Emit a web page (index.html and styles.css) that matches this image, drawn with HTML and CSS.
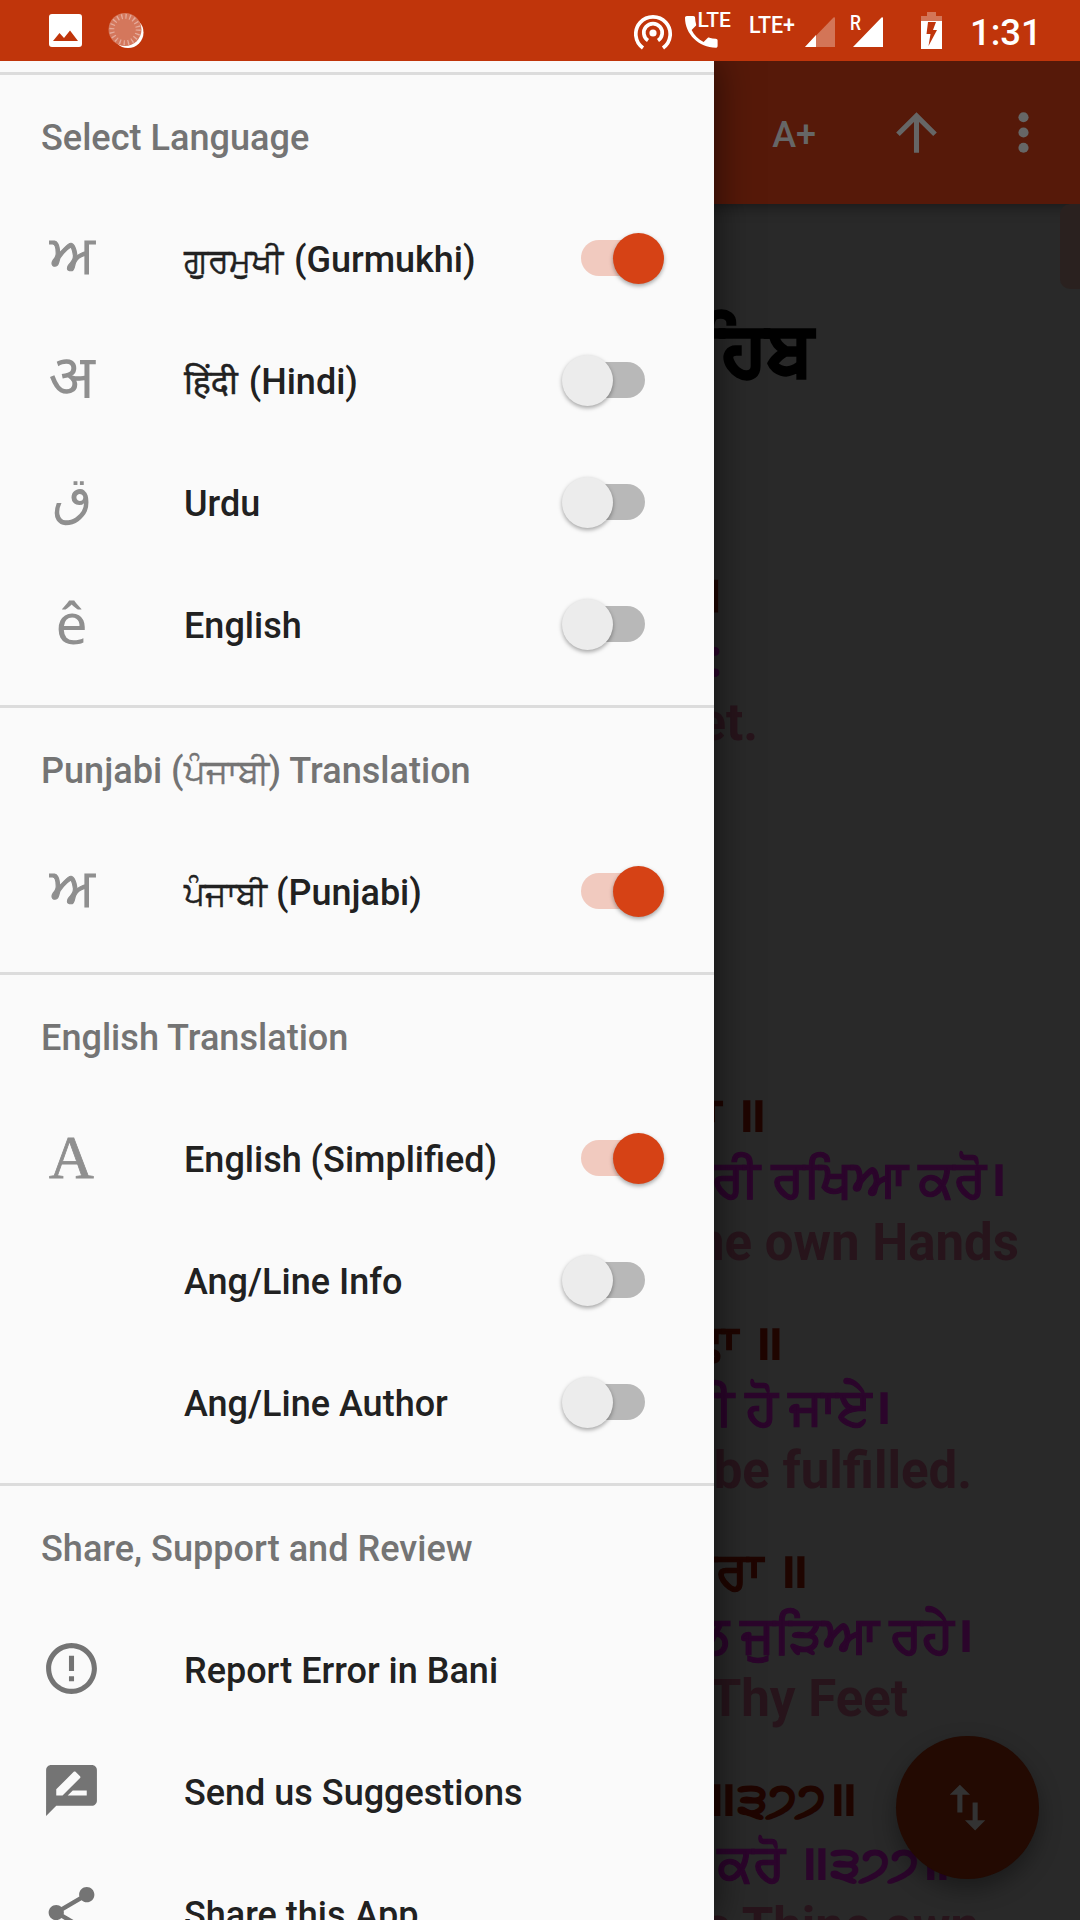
FILE: index.html
```html
<!DOCTYPE html>
<html lang="pa">
<head>
<meta charset="utf-8">
<title>Bani</title>
<link rel="stylesheet" href="styles.css">
</head>
<body>
<div class="screen">
  <header class="status">
    <svg class="status-left" width="100" height="61" viewBox="46 0 100 61">
      <path fill="#fff" fill-rule="evenodd" d="M52 14h27q3 0 3 3v27q0 3-3 3H52q-3 0-3-3V17q0-3 3-3zM53 41h25l-8-10.500-6 7.500-4.500-5z"/>
      <circle cx="128" cy="32.500" r="15.500" fill="#fff"/>
      <circle cx="125" cy="29.500" r="16.500" fill="#d4775c"/>
      <circle cx="125" cy="29.500" r="13.200" fill="none" stroke="#e5ab9b" stroke-width="5" stroke-dasharray="1.300 2.847"/>
    </svg>
    <svg class="status-right" width="312" height="61" viewBox="634 0 312 61">
      <g fill="none" stroke="#fff" stroke-width="3.700">
        <path d="M643 48a17.200 17.200 0 1 1 20 0"/>
        <path d="M648 40.500a9.200 9.200 0 1 1 10 0"/>
      </g>
      <circle cx="653" cy="33" r="3.600" fill="#fff"/>
      <path fill="#fff" d="M686.800 16h6.500c1 0 1.800.8 1.800 1.800 0 2.300.4 4.400 1 6.500.2.600.1 1.300-.5 1.800l-4 4c2.600 5.200 6.800 9.400 12 12l4-4c.5-.5 1.200-.6 1.800-.4 2 .7 4.200 1 6.400 1 1 0 1.800.8 1.800 1.800V46c0 1-.8 1.800-1.800 1.800-17 0-30.800-13.800-30.800-30 0-1 .8-1.800 1.800-1.800z"/>
      <text class="tag" x="697.500" y="27" font-size="19.500" textLength="33.500" lengthAdjust="spacingAndGlyphs">LTE</text>
      <text class="tag" x="749" y="32.500" font-size="24.500" textLength="46" lengthAdjust="spacingAndGlyphs">LTE+</text>
      <path fill="#d37557" d="M805 47 833.500 17.500q1.500-1 1.500 1V47z"/>
      <path fill="#fff" d="M805 47l11-12v12zM853 47 881.500 17.500q1.500-1 1.500 1V47z"/>
      <text class="tag" x="850" y="30" font-size="19.500" textLength="11" lengthAdjust="spacingAndGlyphs">R</text>
      <path fill="#d37557" d="M927 12h9v4h6v5h-21v-5h6z"/>
      <path fill="#fff" fill-rule="evenodd" d="M921 21h21v28h-21zM928 22l-1.500 12h4l-2 12 8.500-16h-4l3-8z"/>
    </svg>
    <span class="clock">1:31</span>
  </header>

  <nav class="toolbar">
    <span class="zoom">A+</span>
    <svg class="icon" viewBox="0 0 24 24"><path d="M4 12l1.410 1.410L11 7.830V20h2V7.830l5.580 5.590L20 12l-8-8-8 8z"/></svg>
    <svg class="icon" viewBox="0 0 24 24"><circle cx="12" cy="6" r="2"/><circle cx="12" cy="12" r="2"/><circle cx="12" cy="18" r="2"/></svg>
  </nav>

  <main class="reader">
    <h1 class="title">ਸਾਹਿਬ</h1>
    <section class="stanza opening">
      <p class="verse e1">ਚੌਪਈ ।</p>
      <p class="meaning e2">ਚੌਪਈ :</p>
      <p class="english e3">feet.</p>
    </section>
    <section class="stanza">
      <p class="verse e4">ਰਛਾ <span class="danda">॥</span></p>
      <p class="meaning e5">ਮੇਰੀ ਰਖਿਆ ਕਰੋ<span class="danda">।</span></p>
      <p class="english e6">Thine own Hands</p>
    </section>
    <section class="stanza">
      <p class="verse e7">ਇਛਾ <span class="danda">॥</span></p>
      <p class="meaning e8">ਪੂਰੀ ਹੋ ਜਾਏ<span class="danda">।</span></p>
      <p class="english e9">be fulfilled.</p>
    </section>
    <section class="stanza">
      <p class="verse e10">ਹਮਾਰਾ <span class="danda">॥</span></p>
      <p class="meaning e11">ਨਾਲ ਜੁੜਿਆ ਰਹੇ<span class="danda">।</span></p>
      <p class="english e12">Thy Feet</p>
    </section>
    <section class="stanza">
      <p class="verse e13"><span class="danda">॥</span><span class="num">੩੭੭</span><span class="danda">॥</span></p>
      <p class="meaning e14">ਕਰੋ <span class="danda">॥</span><span class="num">੩੭੭</span><span class="danda">॥</span></p>
      <p class="english e15">as Thine own</p>
    </section>
  </main>
  <div class="scroll-thumb"></div>
  <div class="fab"><svg class="icon" viewBox="0 0 24 24"><path d="M9 3L5 6.990h3V14h2V6.990h3L9 3zm7 14.010V10h-2v7.010h-3L15 21l4-3.990h-3z"/></svg></div>

  <aside class="drawer">
    <section class="group">
      <h2>Select Language</h2>
      <div class="row"><span class="glyph gur">ਅ</span><span class="label"><span class="indic spaced">ਗੁਰਮੁਖੀ</span> (Gurmukhi)</span><i class="switch on"></i></div>
      <div class="row"><span class="glyph dev">अ</span><span class="label"><span class="indic spaced">हिंदी</span> (Hindi)</span><i class="switch"></i></div>
      <div class="row"><span class="glyph ara">ق</span><span class="label">Urdu</span><i class="switch"></i></div>
      <div class="row"><span class="glyph lat">ê</span><span class="label">English</span><i class="switch"></i></div>
    </section>
    <section class="group">
      <h2>Punjabi (<span class="indic">ਪੰਜਾਬੀ</span>) Translation</h2>
      <div class="row"><span class="glyph gur">ਅ</span><span class="label"><span class="indic punjabi">ਪੰਜਾਬੀ</span> (Punjabi)</span><i class="switch on"></i></div>
    </section>
    <section class="group">
      <h2>English Translation</h2>
      <div class="row"><span class="glyph ser">A</span><span class="label">English (Simplified)</span><i class="switch on"></i></div>
      <div class="row"><span class="glyph"></span><span class="label">Ang/Line Info</span><i class="switch"></i></div>
      <div class="row"><span class="glyph"></span><span class="label">Ang/Line Author</span><i class="switch"></i></div>
    </section>
    <section class="group">
      <h2>Share, Support and Review</h2>
      <div class="row"><svg class="icon" viewBox="0 0 24 24"><path d="M11 15h2v2h-2zm0-8h2v6h-2zm.990-5C6.470 2 2 6.480 2 12s4.470 10 9.990 10C17.520 22 22 17.520 22 12S17.520 2 11.990 2zM12 20c-4.420 0-8-3.580-8-8s3.580-8 8-8 8 3.580 8 8-3.580 8-8 8z"/></svg><span class="label">Report Error in Bani</span></div>
      <div class="row"><svg class="icon" viewBox="0 0 24 24"><path d="M20 2H4c-1.100 0-1.990.9-1.990 2L2 22l4-4h14c1.100 0 2-.9 2-2V4c0-1.100-.9-2-2-2zM6 14v-2.470l6.880-6.880c.2-.2.510-.2.710 0l1.770 1.770c.2.2.2.510 0 .710L8.470 14H6zm12 0h-7.500l2-2H18v2z"/></svg><span class="label">Send us Suggestions</span></div>
      <div class="row"><svg class="icon" viewBox="0 0 24 24"><path d="M18 16.080c-.760 0-1.440.3-1.960.770L8.910 12.700c.050-.230.090-.460.090-.7s-.040-.470-.090-.7l7.050-4.110c.540.5 1.250.810 2.040.810 1.660 0 3-1.340 3-3s-1.340-3-3-3-3 1.340-3 3c0 .240.040.470.090.7L8.040 9.810C7.500 9.310 6.790 9 6 9c-1.660 0-3 1.340-3 3s1.340 3 3 3c.790 0 1.500-.310 2.040-.810l7.120 4.160c-.050.210-.080.430-.080.650 0 1.610 1.310 2.920 2.920 2.920s2.920-1.310 2.920-2.920-1.310-2.920-2.920-2.920z"/></svg><span class="label">Share this App</span></div>
    </section>
  </aside>
</div>
</body>
</html>
```
FILE: styles.css
```css
* { box-sizing: border-box; margin: 0; }
body { background: #292929; font-family: Roboto, "Noto Sans", sans-serif; }
.screen { position: relative; width: 1080px; height: 1920px; overflow: hidden; background: #292929; }

.status { position: relative; z-index: 1; display: flex; height: 61px; padding-left: 46px; background: #c0350b; color: #fff; }
.status-right { margin-left: 488px; }
.tag { fill: #fff; font-family: Roboto, sans-serif; font-weight: 500; }
.clock { margin-left: 24px; font-size: 36.500px; font-weight: 500; line-height: 65px; }

.toolbar { display: flex; align-items: center; justify-content: flex-end; height: 143px; padding: 0 26px 0 0; background: #561909; color: #666; box-shadow: 0 2px 14px rgba(0, 0, 0, .45); }
.zoom { margin-right: 70px; padding-top: 4px; font-size: 36px; font-weight: 500; }
.icon { width: 61px; height: 61px; flex: none; fill: currentColor; }
.toolbar .icon + .icon { margin-left: 46px; }

.reader { padding-top: 96px; text-align: right; white-space: nowrap; font-weight: 700; }
.title { font-size: 73px; line-height: 98px; padding-right: 267px; color: #000; -webkit-text-stroke: 3px #000; }
.stanza { margin-bottom: 36px; font-size: 51px; line-height: 64px; }
.opening { margin-top: 165px; margin-bottom: 328px; }
.verse { color: #1f0500; -webkit-text-stroke: 1px #1f0500; }
.meaning { color: #2b052b; -webkit-text-stroke: 1px #2b052b; }
.english { color: #27141b; }
.danda { -webkit-text-stroke: 0; }
.num { margin: 0 1px; font-size: 47px; line-height: 1; letter-spacing: -1px; -webkit-text-stroke-width: 1.500px; }
.e1 { padding-right: 358px; }
.e2 { padding-right: 358px; }
.e3 { padding-right: 322px; }
.e4 { padding-right: 313px; }
.e5 { padding-right: 73px; }
.e6 { padding-right: 61px; }
.e7 { padding-right: 296px; }
.e8 { padding-right: 188px; }
.e9 { padding-right: 108px; }
.e10 { padding-right: 271px; }
.e11 { padding-right: 106px; }
.e12 { padding-right: 172px; }
.e13 { padding-right: 222px; }
.e14 { padding-right: 129px; }
.e15 { padding-right: 101px; }

.scroll-thumb { position: absolute; top: 204px; right: 0; width: 20px; height: 85px; border-radius: 10px 0 0 10px; background: #2a211f; }
.fab { position: absolute; left: 896px; top: 1736px; width: 143px; height: 143px; display: flex; align-items: center; justify-content: center; border-radius: 50%; background: #230a02; color: #333; box-shadow: 0 10px 22px rgba(0, 0, 0, .35); }

.drawer { position: absolute; left: 0; top: 61px; width: 714px; height: 1859px; padding-top: 11px; overflow: hidden; background: #fafafa; box-shadow: 0 0 36px rgba(0, 0, 0, .6); }
.group { border-top: 3px solid #dcdcdc; padding-bottom: 20px; color: #212121; }
h2 { height: 122px; padding-left: 41px; font-size: 36.100px; font-weight: 500; line-height: 127px; color: #747474; white-space: nowrap; }
.row { display: flex; align-items: center; height: 122px; padding: 0 50px 0 41px; }
.row .icon { margin-bottom: 2px; color: #747474; }
.label { flex: 1; margin-left: 82px; padding-top: 4px; font-size: 36px; font-weight: 500; line-height: 42px; white-space: nowrap; }
.indic { font-size: 34px; font-weight: 400; -webkit-text-stroke: .5px currentColor; }
.spaced { margin-right: 2px; }
.punjabi { font-size: 33px; }
.glyph { width: 61px; flex: none; text-align: center; line-height: 61px; height: 61px; margin-bottom: 6px; color: #8f8f8f; }
.gur { padding-left: 1px; font-size: 52px; margin-bottom: 8px; -webkit-text-stroke: 1.200px #8f8f8f; }
.dev { font-size: 61px; }
.ara { font-size: 52px; margin-bottom: 12px; }
.lat { font-family: "Noto Sans", sans-serif; font-size: 57px; margin-bottom: 4px; }
.ser { font-family: "Liberation Serif", serif; font-size: 62px; margin-bottom: 1px; -webkit-text-stroke: .8px #8f8f8f; }

.switch { position: relative; width: 103px; height: 52px; flex: none; }
.switch::before { content: ""; position: absolute; left: 20px; top: 8px; width: 64px; height: 36px; border-radius: 18px; background: #b8b8b8; }
.switch::after { content: ""; position: absolute; left: 1px; top: 1px; width: 51px; height: 51px; border-radius: 50%; background: #ececec; box-shadow: 0 2px 4px rgba(0, 0, 0, .35); }
.switch.on::before { background: #f1cabf; }
.switch.on::after { left: 52px; background: #d64215; }
```
